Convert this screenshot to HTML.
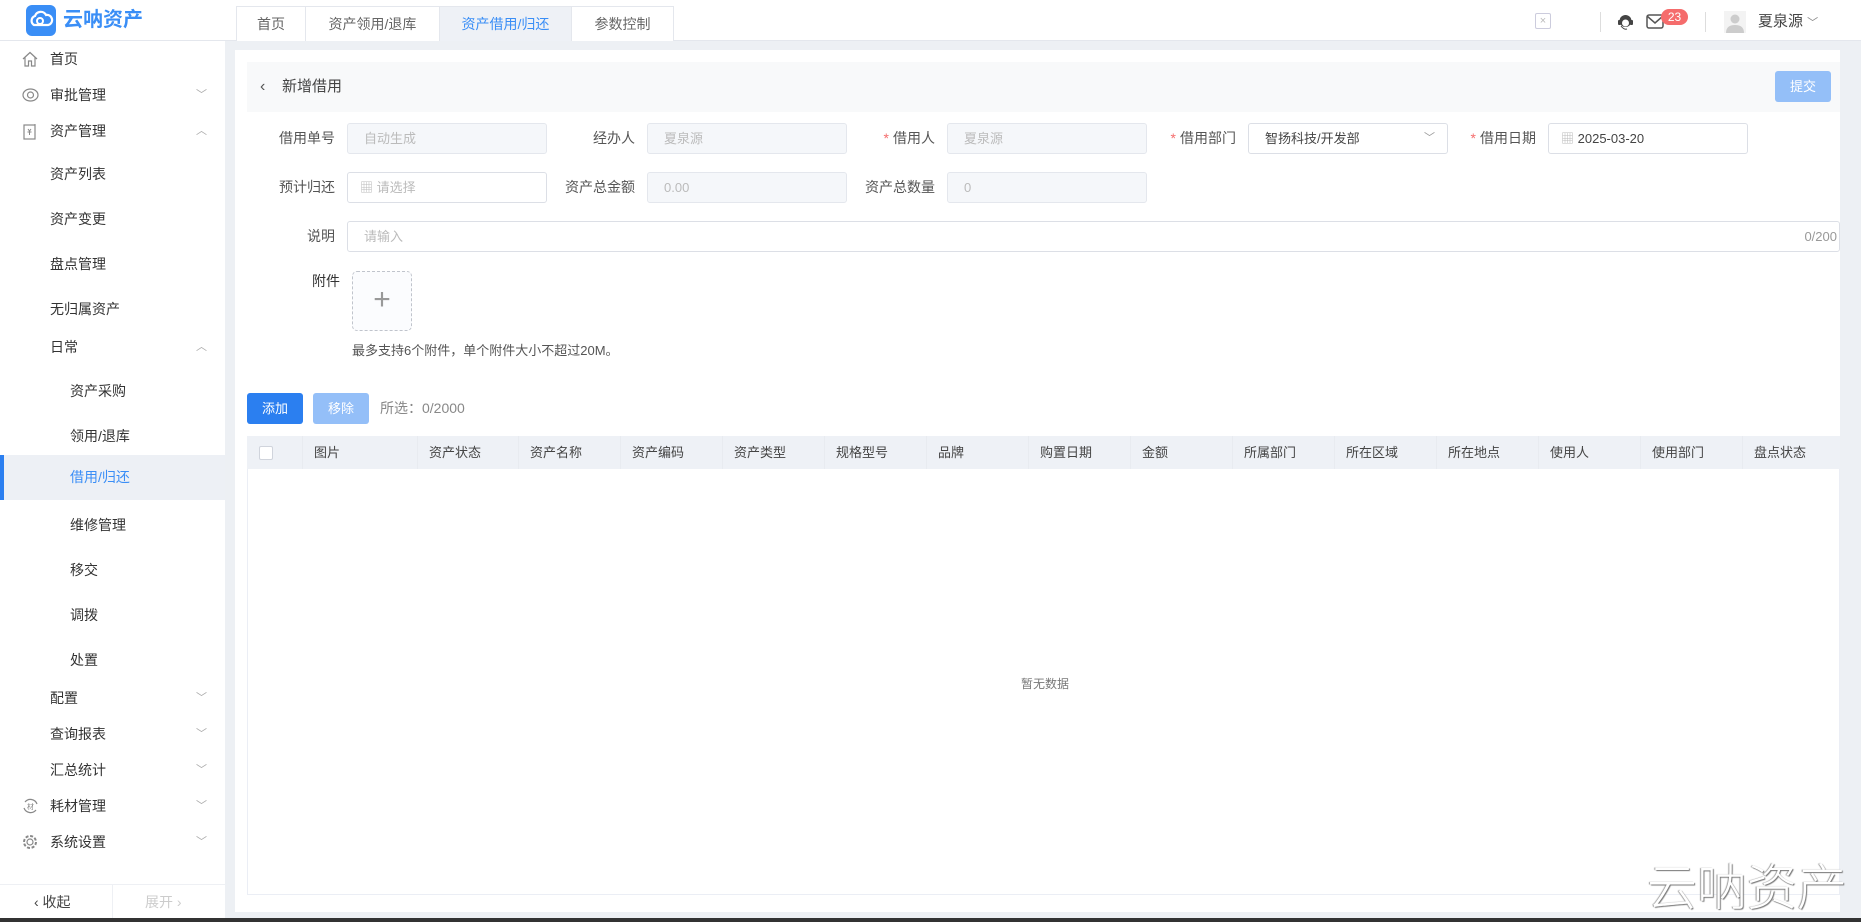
<!DOCTYPE html>
<html><head><meta charset="utf-8"><style>
*{box-sizing:border-box;margin:0;padding:0}
body{width:1861px;height:922px;overflow:hidden;background:#edf0f4;font-family:"Liberation Sans","Noto Sans CJK SC",sans-serif;font-size:14px;color:#333;position:relative}
.abs{position:absolute}
.hdr{left:0;top:0;width:1861px;height:41px;background:#fff;border-bottom:1px solid #e4e7ed}
.side{left:0;top:41px;width:225px;height:877px;background:#fff}
.mi{position:absolute;left:0;width:225px;height:36px;line-height:36px;font-size:14px;color:#333}
.mi svg{position:absolute;left:22px;top:10px}
.chev{position:absolute;right:18px;top:0;color:#aaa;font-size:11px}
.tab{top:6px;height:35px;line-height:35px;text-align:center;font-size:14px;color:#666;border:1px solid #e4e7ed;border-bottom:none;background:#fff}
.panel{left:235px;top:50px;width:1605px;height:862px;background:#fff}
.lbl{position:absolute;text-align:right;font-size:14px;color:#555;width:120px;line-height:31px}
.lbl i{color:#f56c6c;font-style:normal;margin-right:4px}
.inp{position:absolute;height:31px;border:1px solid #dcdfe6;border-radius:3px;line-height:29px;padding-left:16px;font-size:13px;color:#bbb}
.dis{background:#f5f7fa;border-color:#e4e7ed}
.th{position:absolute;top:0;height:33px;line-height:33px;font-size:13px;color:#444;padding-left:11px;border-left:1px solid #e8ebf0}
</style></head><body>
<div class="abs hdr"></div>
<div class="abs" style="left:26px;top:5px;width:30px;height:31px;background:#3a8ef6;border-radius:6px">
<svg width="30" height="31" viewBox="0 0 30 31"><path d="M8 20a5 5 0 0 1 1-9 6 6 0 0 1 11-1 5 5 0 0 1 2 10z" fill="none" stroke="#fff" stroke-width="2.2"/><circle cx="14" cy="16" r="3" fill="none" stroke="#fff" stroke-width="2"/></svg></div>
<div class="abs" style="left:63px;top:6px;font-size:20px;font-weight:bold;color:#3a8ef6;line-height:28px">云呐资产</div>
<div class="abs tab" style="left:236px;width:70px">首页</div>
<div class="abs tab" style="left:305px;width:135px">资产领用/退库</div>
<div class="abs tab" style="left:439px;width:133px;background:#eef1f6;color:#3a8ef6">资产借用/归还</div>
<div class="abs tab" style="left:571px;width:103px">参数控制</div>
<div class="abs" style="left:1535px;top:13px;width:16px;height:16px;border:1px solid #ccd;border-radius:2px;color:#bbb;font-size:11px;line-height:14px;text-align:center">×</div>
<div class="abs" style="left:1600px;top:12px;width:1px;height:20px;background:#ddd"></div>
<svg class="abs" style="left:1617px;top:13px" width="17" height="18" viewBox="0 0 17 18"><circle cx="8.5" cy="8" r="6" fill="#444"/><rect x="1" y="7" width="3" height="5" rx="1" fill="#444"/><rect x="13" y="7" width="3" height="5" rx="1" fill="#444"/><circle cx="8.5" cy="10" r="3.5" fill="#fff"/><path d="M4 13q3 4 6 3" stroke="#444" fill="none"/></svg>
<svg class="abs" style="left:1646px;top:14px" width="18" height="15" viewBox="0 0 18 15"><rect x="1" y="1" width="16" height="13" rx="2" fill="none" stroke="#555" stroke-width="1.5"/><path d="M1 2l8 7 8-7" fill="none" stroke="#555" stroke-width="1.5"/></svg>
<div class="abs" style="left:1661px;top:9px;width:27px;height:16px;border-radius:8px;background:#f56c6c;color:#fff;font-size:12px;line-height:16px;text-align:center">23</div>
<div class="abs" style="left:1705px;top:12px;width:1px;height:20px;background:#ddd"></div>
<svg class="abs" style="left:1724px;top:11px" width="22" height="22" viewBox="0 0 22 22"><rect width="22" height="22" fill="#f3f3f3"/><circle cx="11" cy="8" r="4.5" fill="#ccc"/><path d="M2 22q0-8 9-8t9 8z" fill="#ccc"/></svg>
<div class="abs" style="left:1758px;top:11px;font-size:15px;color:#444;line-height:22px">夏泉源 <span style="color:#888;font-size:11px">﹀</span></div>

<div class="abs side">
<div class="mi" style="top:0"><svg width="16" height="16" viewBox="0 0 16 16"><path d="M1 8L8 1.5 15 8M3 6.5V15h3.5v-5h3v5H13V6.5" fill="none" stroke="#888" stroke-width="1.2"/></svg><span style="padding-left:50px">首页</span></div>
<div class="mi" style="top:36px"><svg width="17" height="16" viewBox="0 0 17 16"><ellipse cx="8.5" cy="8" rx="7.5" ry="6" fill="none" stroke="#888" stroke-width="1.2"/><circle cx="8.5" cy="8" r="3" fill="none" stroke="#888" stroke-width="1.2"/></svg><span style="padding-left:50px">审批管理</span><span class="chev">﹀</span></div>
<div class="mi" style="top:72px"><svg width="16" height="17" viewBox="0 0 16 17"><rect x="2" y="2" width="11" height="14" fill="none" stroke="#888" stroke-width="1.2"/><path d="M6 6l1.5 2L9 6M5.5 9h4M7.5 8v4M13 1v4" fill="none" stroke="#888"/></svg><span style="padding-left:50px">资产管理</span><span class="chev">︿</span></div>
<div class="mi" style="top:115px;padding-left:50px">资产列表</div>
<div class="mi" style="top:160px;padding-left:50px">资产变更</div>
<div class="mi" style="top:205px;padding-left:50px">盘点管理</div>
<div class="mi" style="top:250px;padding-left:50px">无归属资产</div>
<div class="mi" style="top:288px;padding-left:50px">日常<span class="chev">︿</span></div>
<div class="mi" style="top:332px;padding-left:70px">资产采购</div>
<div class="mi" style="top:377px;padding-left:70px">领用/退库</div>
<div class="mi" style="top:414px;height:45px;line-height:45px;background:#edf0f5;color:#3a8ef6;padding-left:66px;border-left:4px solid #2b7ff0">借用/归还</div>
<div class="mi" style="top:466px;padding-left:70px">维修管理</div>
<div class="mi" style="top:511px;padding-left:70px">移交</div>
<div class="mi" style="top:556px;padding-left:70px">调拨</div>
<div class="mi" style="top:601px;padding-left:70px">处置</div>
<div class="mi" style="top:639px;padding-left:50px">配置<span class="chev">﹀</span></div>
<div class="mi" style="top:675px;padding-left:50px">查询报表<span class="chev">﹀</span></div>
<div class="mi" style="top:711px;padding-left:50px">汇总统计<span class="chev">﹀</span></div>
<div class="mi" style="top:747px"><svg width="17" height="16" viewBox="0 0 17 16"><path d="M3 4a7 7 0 0 1 12 2M14 12a7 7 0 0 1-12-2" fill="none" stroke="#888" stroke-width="1.2"/><text x="8.5" y="11" font-size="7" text-anchor="middle" fill="#888">材</text></svg><span style="padding-left:50px">耗材管理</span><span class="chev">﹀</span></div>
<div class="mi" style="top:783px"><svg width="16" height="16" viewBox="0 0 16 16"><circle cx="8" cy="8" r="6" fill="none" stroke="#888" stroke-width="2" stroke-dasharray="3 1.7"/><circle cx="8" cy="8" r="3" fill="none" stroke="#888" stroke-width="1.2"/></svg><span style="padding-left:50px">系统设置</span><span class="chev">﹀</span></div>
<div class="abs" style="left:0;top:843px;width:225px;height:34px;border-top:1px solid #eef0f4"></div>
<div class="abs" style="left:112px;top:843px;width:1px;height:34px;background:#eef0f4"></div>
<div class="abs" style="left:34px;top:851px;color:#444">‹ 收起</div>
<div class="abs" style="left:145px;top:851px;color:#ccc">展开 ›</div>
</div>

<div class="abs panel"></div>
<div class="abs" style="left:247px;top:62px;width:1593px;height:50px;background:#f8f9fa"></div>
<div class="abs" style="left:260px;top:75px;font-size:16px;color:#555;line-height:24px">‹</div>
<div class="abs" style="left:282px;top:75px;font-size:15px;color:#444;line-height:24px">新增借用</div>
<div class="abs" style="left:1775px;top:71px;width:56px;height:31px;background:#94bff8;border-radius:3px;color:#fff;font-size:13px;line-height:31px;text-align:center">提交</div>

<div class="lbl" style="left:215px;top:123px">借用单号</div><div class="inp dis" style="left:347px;top:123px;width:200px">自动生成</div>
<div class="lbl" style="left:515px;top:123px">经办人</div><div class="inp dis" style="left:647px;top:123px;width:200px">夏泉源</div>
<div class="lbl" style="left:815px;top:123px"><i>*</i>借用人</div><div class="inp dis" style="left:947px;top:123px;width:200px">夏泉源</div>
<div class="lbl" style="left:1116px;top:123px"><i>*</i>借用部门</div><div class="inp" style="left:1248px;top:123px;width:200px;color:#444">智扬科技/开发部<span style="position:absolute;right:12px;color:#999;font-size:11px">﹀</span></div>
<div class="lbl" style="left:1416px;top:123px"><i>*</i>借用日期</div><div class="inp" style="left:1548px;top:123px;width:200px;color:#444;padding-left:12px"><span style="color:#bbb">▦</span> 2025-03-20</div>
<div class="lbl" style="left:215px;top:172px">预计归还</div><div class="inp" style="left:347px;top:172px;width:200px;padding-left:12px"><span>▦</span> 请选择</div>
<div class="lbl" style="left:515px;top:172px">资产总金额</div><div class="inp dis" style="left:647px;top:172px;width:200px">0.00</div>
<div class="lbl" style="left:815px;top:172px">资产总数量</div><div class="inp dis" style="left:947px;top:172px;width:200px">0</div>
<div class="lbl" style="left:215px;top:221px">说明</div><div class="inp" style="left:347px;top:221px;width:1493px">请输入<span style="position:absolute;right:2px;color:#999">0/200</span></div>
<div class="lbl" style="left:220px;top:266px;color:#333">附件</div>
<div class="abs" style="left:352px;top:271px;width:60px;height:60px;border:1px dashed #c0c4cc;border-radius:5px;background:#fbfcfe;text-align:center;line-height:56px;font-size:30px;color:#999;font-weight:200">+</div>
<div class="abs" style="left:352px;top:341px;font-size:13px;color:#555;line-height:20px">最多支持6个附件，单个附件大小不超过20M。</div>

<div class="abs" style="left:247px;top:393px;width:56px;height:31px;background:#2b7ff0;border-radius:3px;color:#fff;font-size:13px;line-height:31px;text-align:center">添加</div>
<div class="abs" style="left:313px;top:393px;width:56px;height:31px;background:#94bff8;border-radius:3px;color:#fff;font-size:13px;line-height:31px;text-align:center">移除</div>
<div class="abs" style="left:380px;top:393px;font-size:14px;color:#888;line-height:31px">所选：0/2000</div>

<div class="abs" style="left:247px;top:436px;width:1593px;height:459px;border:1px solid #ebeef5"></div>
<div class="abs" style="left:247px;top:436px;width:1593px;height:33px;background:#eef1f6">
<div class="abs" style="left:12px;top:10px;width:14px;height:14px;border:1px solid #d0d4dc;border-radius:2px;background:#fff"></div>
<div class="th" style="left:55px">图片</div>
<div class="th" style="left:170px">资产状态</div><div class="th" style="left:271px">资产名称</div><div class="th" style="left:373px">资产编码</div><div class="th" style="left:475px">资产类型</div><div class="th" style="left:577px">规格型号</div><div class="th" style="left:679px">品牌</div><div class="th" style="left:781px">购置日期</div><div class="th" style="left:883px">金额</div><div class="th" style="left:985px">所属部门</div><div class="th" style="left:1087px">所在区域</div><div class="th" style="left:1189px">所在地点</div><div class="th" style="left:1291px">使用人</div><div class="th" style="left:1393px">使用部门</div><div class="th" style="left:1495px">盘点状态</div>
</div>
<div class="abs" style="left:1021px;top:675px;font-size:12px;color:#777">暂无数据</div>
<div class="abs" style="left:1647px;top:858px;font-size:50px;color:#fff;font-weight:300;text-shadow:1px 1px 1px #777,-1px 0 1px #999;line-height:60px">云呐资产</div>
<div class="abs" style="left:0;top:918px;width:1861px;height:4px;background:#333"></div>
</body></html>
